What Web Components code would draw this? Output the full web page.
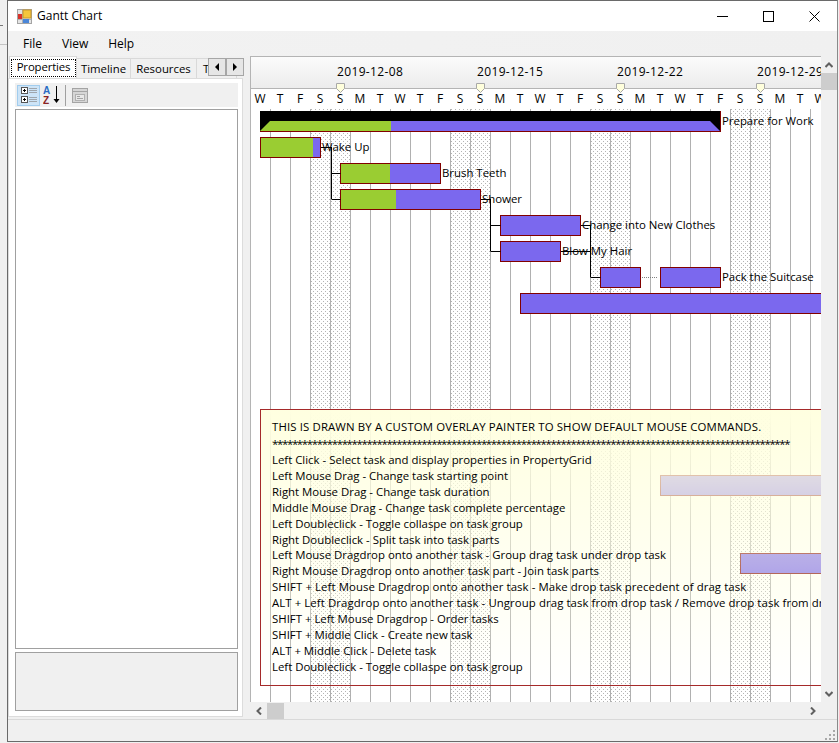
<!DOCTYPE html>
<html>
<head>
<meta charset="utf-8">
<title>Gantt Chart</title>
<style>
  html, body { margin: 0; height: 743px; overflow: hidden; }
  body {
    background:
      linear-gradient(#777, #777) 0 25px / 3px 1px no-repeat,
      linear-gradient(#c4c4c4, #c4c4c4) 0 44px / 7px 1px no-repeat,
      #f0f0f0;
    font: 12px "Open Sans", "Liberation Sans", sans-serif;
    color: #000;
  }
</style>
</head>
<body>
<app-window>
  <title-bar slot="title">Gantt Chart</title-bar>
  <menu-bar slot="menu">
    <span>File</span>
    <span>View</span>
    <span>Help</span>
  </menu-bar>
  <side-panel slot="side"></side-panel>
  <gantt-chart slot="chart"></gantt-chart>
</app-window>

<script>
const makeTemplate = (html) => {
    const template = document.createElement('template');
    template.innerHTML = html;
    return template;
};

class Base extends HTMLElement {
    connectedCallback() {
        if (this.shadowRoot) return;
        this.attachShadow({mode: 'open'});
        this.shadowRoot.appendChild(this.constructor.template.content.cloneNode(true));
        this.render && this.render();
    }
    $(selector) {
        return this.shadowRoot.querySelector(selector);
    }
}

class AppWindow extends Base {
    static template = makeTemplate(`
      <style>
        :host {
            display: flex;
            flex-direction: column;
            box-sizing: border-box;
            width: 831px;
            height: 742px;
            margin-left: 7px;
            background: #f0f0f0;
            border: 1px solid #6a6a6a;
            border-right-color: #8a8a8a;
        }
        .main { display: flex; height: 663px; }
        .side { width: 235px; flex: none; }
        .chart { margin-left: 7px; flex: 1; min-width: 0; }
        .status {
            position: relative;
            flex: 1;
            border-top: 1px solid #d9d9d9;
        }
        .status svg { position: absolute; right: 1px; bottom: 0; }
      </style>
      <slot name="title"></slot>
      <slot name="menu"></slot>
      <div class="main">
        <div class="side"><slot name="side"></slot></div>
        <div class="chart"><slot name="chart"></slot></div>
      </div>
      <div class="status">
        <svg width="12" height="12" fill="#a8a8a8">
          <rect x="9" y="1" width="2" height="2"/>
          <rect x="5" y="5" width="2" height="2"/><rect x="9" y="5" width="2" height="2"/>
          <rect x="1" y="9" width="2" height="2"/><rect x="5" y="9" width="2" height="2"/><rect x="9" y="9" width="2" height="2"/>
        </svg>
      </div>
    `);
}

class TitleBar extends Base {
    static template = makeTemplate(`
      <style>
        :host {
            display: flex;
            align-items: center;
            height: 30px;
            background: #fff;
        }
        svg.logo { margin: 0 6px 0 9px; flex: none; }
        .text { flex: 1; font-size: 12px; margin: -1px 0 0 -1px; padding-bottom: 1px; }
        .btn {
            width: 46px;
            height: 30px;
            display: flex;
            align-items: center;
            justify-content: center;
        }
      </style>
      <svg class="logo" width="15" height="15">
        <rect x=".5" y=".5" width="14" height="14" fill="#e4e4e4" stroke="#a4a4a4"/>
        <path d="M5.5 1v13M1 5.500h4M1 10.500h13" stroke="#b0b0b0"/>
        <rect x="6" y="1" width="8" height="8" fill="#f4c63c" stroke="#c8962a"/>
        <rect x="1" y="5" width="4" height="5" fill="#d8332a"/>
        <rect x="6" y="10" width="6" height="4" fill="#4a86d8"/>
      </svg>
      <div class="text"><slot></slot></div>
      <div class="btn"><svg width="11" height="11"><path d="M0 5.500h11" stroke="#000"/></svg></div>
      <div class="btn"><svg width="11" height="11"><rect x=".5" y=".5" width="10" height="10" fill="none" stroke="#000"/></svg></div>
      <div class="btn"><svg width="11" height="11"><path d="M.5 .5l10 10M10.500 .5l-10 10" stroke="#000"/></svg></div>
    `);
}

class MenuBar extends Base {
    static template = makeTemplate(`
      <style>
        :host {
            display: flex;
            align-items: center;
            gap: 20px;
            height: 25px;
            padding-left: 15px;
            background: linear-gradient(to right, #f2f2f2, #f0f0f0);
        }
      </style>
      <slot></slot>
    `);
}

class TabStrip extends Base {
    static template = makeTemplate(`
      <style>
        :host {
            display: flex;
            align-items: flex-end;
            position: relative;
            height: 22px;
            width: 236px;
            margin-left: 1px;
            overflow: hidden;
            font-size: 11.4px;
        }
        .tab {
            box-sizing: border-box;
            height: 20px;
            padding-top: 2px;
            flex: none;
            background: #f0f0f0;
            border: 1px solid #d9d9d9;
            border-bottom: none;
            border-left: none;
            text-align: center;
        }
        .tab.on {
            height: 22px;
            background: #fff;
            border-left: 1px solid #d9d9d9;
            padding: 2px 0 0 1px;
        }
        .tab.on span {
            display: block;
            height: 18px;
            line-height: 16px;
            letter-spacing: -.15px;
            outline: 1px dotted #000;
            outline-offset: -1px;
        }
        .scroll {
            position: absolute;
            left: 199px;
            top: 2px;
            display: flex;
        }
        .scroll div {
            box-sizing: border-box;
            width: 18px;
            height: 18px;
            background: #e6e6e6;
            border: 1px solid #a6a6a6;
            display: flex;
            align-items: center;
            justify-content: center;
        }
      </style>
      <div class="tab on" style="width:68px"><span>Properties</span></div>
      <div class="tab" style="width:54px">Timeline</div>
      <div class="tab" style="width:66px">Resources</div>
      <div class="tab" style="width:40px;text-align:left;padding-left:6px">Tasks</div>
      <div class="scroll">
        <div><svg width="6" height="8"><path d="M5 0v8L1 4z"/></svg></div>
        <div><svg width="6" height="8"><path d="M1 0v8l4-4z"/></svg></div>
      </div>
    `);
}

class PropToolbar extends Base {
    static template = makeTemplate(`
      <style>
        :host {
            display: flex;
            align-items: center;
            height: 24px;
            flex: none;
            background: #f0f0f0;
        }
        .btn {
            box-sizing: border-box;
            width: 23px;
            height: 21px;
            margin-left: 2px;
            display: flex;
            align-items: center;
            justify-content: center;
            background: #cde4f7;
            border: 1px solid #a2cdee;
        }
        .sep { width: 1px; height: 21px; background: #a0a0a0; margin: 0 6px 0 5px; }
        svg { display: block; flex: none; }
        .az { margin-left: 3px; }
        text { font: bold 10px "Liberation Sans", sans-serif; }
      </style>
      <div class="btn">
        <svg width="16" height="16">
          <g fill="#fff" stroke="#555">
            <rect x=".5" y=".5" width="6" height="6"/>
            <rect x=".5" y="9.500" width="6" height="6"/>
          </g>
          <path d="M2 3.500h3M3.500 2v3M2 12.500h3M3.500 11v3" stroke="#000"/>
          <path d="M8 1.500h8M8 3.500h8M8 5.500h8M8 10.500h8M8 12.500h8M8 14.500h8" stroke="#a0a6ac"/>
        </svg>
      </div>
      <svg class="az" width="17" height="20">
        <text x="0" y="9" fill="#2a6cc4">A</text>
        <text x="0" y="19" fill="#8a2222">Z</text>
        <path d="M13.500 1v16" stroke="#000"/>
        <path d="M10.500 14h6l-3 4z" fill="#000"/>
      </svg>
      <div class="sep"></div>
      <svg width="16" height="15">
        <rect x=".5" y=".5" width="15" height="14" fill="#d6d6d6" stroke="#a4a4a4"/>
        <path d="M1 3.500h14" stroke="#a4a4a4"/>
        <rect x="3.500" y="6.500" width="9" height="6" fill="#e8e8e8" stroke="#b0b0b0"/>
        <path d="M5 8.500h3M5 10.500h6" stroke="#a4a4a4"/>
      </svg>
    `);
}

class SidePanel extends Base {
    static template = makeTemplate(`
      <style>
        :host {
            display: flex;
            flex-direction: column;
            height: 661px;
        }
        .page {
            flex: 1;
            display: flex;
            flex-direction: column;
            min-height: 0;
            background: #fff;
            border: 1px solid #dcdcdc;
            padding: 4px 4px 5px 6px;
        }
        .grid {
            flex: 1;
            margin-top: 2px;
            background: #fff;
            border: 1px solid #a0a0a0;
        }
        .help {
            box-sizing: border-box;
            height: 59px;
            margin-top: 3px;
            flex: none;
            background: #f0f0f0;
            border: 1px solid #a0a0a0;
        }
      </style>
      <tab-strip></tab-strip>
      <div class="page">
        <prop-toolbar></prop-toolbar>
        <div class="grid"></div>
        <div class="help"></div>
      </div>
    `);
}

class ScrollBar extends Base {
    static template = makeTemplate(`
      <style>
        :host {
            display: flex;
            background: #f0f0f0;
            position: relative;
        }
        :host([vertical]) { flex-direction: column; width: 16px; align-items: center; }
        :host(:not([vertical])) { height: 17px; align-items: center; }
        .arrow { display: flex; align-items: center; justify-content: center; flex: none; }
        :host([vertical]) .arrow { height: 17px; width: 16px; }
        :host(:not([vertical])) .arrow { width: 17px; height: 17px; }
        .track { flex: 1; display: flex; }
        :host([vertical]) .track { flex-direction: column; }
        .thumb { background: #cdcdcd; flex: none; }
        :host([vertical]) .thumb { width: 16px; height: 17px; }
        :host(:not([vertical])) .thumb { width: 17px; height: 16px; }
        polyline { fill: none; stroke: #606060; stroke-width: 2; }
      </style>
      <div class="arrow first"></div>
      <div class="track"><div class="thumb"></div></div>
      <div class="arrow last"></div>
    `);
    render() {
        const v = this.hasAttribute('vertical');
        const chevron = (pts) => `<svg width="8" height="8"><polyline points="${pts}"/></svg>`;
        this.$('.first').innerHTML = v ? chevron('.5,6 4,2.5 7.5,6') : chevron('6,.5 2.5,4 6,7.5');
        this.$('.last').innerHTML = v ? chevron('.5,2 4,5.5 7.5,2') : chevron('2,.5 5.5,4 2,7.5');
    }
}

class GanttHeader extends Base {
    static template = makeTemplate(`
      <style>
        :host {
            display: block;
            position: relative;
            z-index: 1;
            height: 53px;
            width: 570px;
            overflow: hidden;
        }
        .dates {
            display: flex;
            height: 31px;
            padding-left: 86px;
            background: linear-gradient(#fbfbfb, #ececec);
            border-top: 1px solid #b4b4b4;
        }
        .date {
            flex: none;
            width: 140px;
            position: relative;
            line-height: 30px;
            letter-spacing: .35px;
        }
        .date svg { position: absolute; left: -1px; top: 26px; z-index: 1; }
        .days {
            display: flex;
            height: 20px;
            margin-left: -1px;
            background: #fff;
            border-top: 1px solid #b4b4b4;
            border-bottom: 1px solid #b4b4b4;
        }
        .days span {
            flex: none;
            width: 20px;
            text-align: center;
            line-height: 19px;
        }
      </style>
      <div class="dates"></div>
      <div class="days"></div>
    `);
    render() {
        const marker = `<svg width="9" height="10"><path d="M.5 .5h8v5l-4 4-4-4z" fill="#ffffdc" stroke="#a8a8a8"/></svg>`;
        this.$('.dates').innerHTML = ['2019-12-08', '2019-12-15', '2019-12-22', '2019-12-29']
            .map(d => `<div class="date">${d}${marker}</div>`).join('');
        const week = 'WTFSSMT';
        let days = '';
        for (let i = 0; i < 29; i++) days += `<span>${week[i % 7]}</span>`;
        this.$('.days').innerHTML = days;
    }
}

class GanttBar extends Base {
    static template = makeTemplate(`
      <style>
        :host {
            position: absolute;
            box-sizing: border-box;
            height: 21px;
            background: #7b68ee;
            border: 1px solid #800000;
        }
        .done { height: 100%; background: #9acd32; }
        :host([group]) {
            background: #000;
            border: none;
            border-right: 1px solid #800000;
            border-bottom: 1px solid #800000;
        }
        :host([group]) .done {
            position: absolute;
            top: 10px;
            left: 0;
            right: 0;
            height: 10px;
            clip-path: polygon(0 100%, 10px 0, calc(100% - 10px) 0, 100% 100%);
        }
      </style>
      <div class="done"></div>
    `);
    render() {
        const left = +this.getAttribute('x');
        const right = +this.getAttribute('to');
        const done = +this.getAttribute('done') || 0;
        this.style.left = (left - 251) + 'px';
        this.style.top = (+this.getAttribute('y') - 109) + 'px';
        this.style.width = (right - left) + 'px';
        const fill = this.$('.done');
        if (this.hasAttribute('group')) {
            const at = done - left;
            fill.style.background = `linear-gradient(to right, #9acd32 ${at}px, #7b68ee ${at}px)`;
        } else {
            fill.style.width = done ? (done - left - 1) + 'px' : '0';
        }
    }
}

class TaskLabel extends Base {
    static template = makeTemplate(`
      <style>
        :host {
            position: absolute;
            white-space: nowrap;
            line-height: 21px;
            font-size: 11.4px;
        }
      </style>
      <slot></slot>
    `);
    render() {
        this.style.left = (+this.getAttribute('x') - 251) + 'px';
        this.style.top = (+this.getAttribute('y') - 109) + 'px';
    }
}

class MouseHelp extends Base {
    static template = makeTemplate(`
      <style>
        :host {
            position: absolute;
            left: 9px;
            top: 300px;
            box-sizing: border-box;
            width: 700px;
            height: 277px;
            padding: 9px 0 0 11px;
            border: 1px solid #a52a2a;
            background: linear-gradient(rgba(255,255,224,1), rgba(255,255,224,0));
            white-space: nowrap;
            line-height: 16px;
            font-size: 11.4px;
        }
        .head { letter-spacing: .13px; }
        .stars { height: 16px; line-height: 18px; margin: 0 0 1px; letter-spacing: -1.3px; }
        .wide { letter-spacing: .08px; }
        div { height: 15.93px; }
      </style>
      <div class="head">THIS IS DRAWN BY A CUSTOM OVERLAY PAINTER TO SHOW DEFAULT MOUSE COMMANDS.</div>
      <div class="stars"></div>
      <div>Left Click - Select task and display properties in PropertyGrid</div>
      <div>Left Mouse Drag - Change task starting point</div>
      <div>Right Mouse Drag - Change task duration</div>
      <div>Middle Mouse Drag - Change task complete percentage</div>
      <div>Left Doubleclick - Toggle collaspe on task group</div>
      <div>Right Doubleclick - Split task into task parts</div>
      <div>Left Mouse Dragdrop onto another task - Group drag task under drop task</div>
      <div>Right Mouse Dragdrop onto another task part - Join task parts</div>
      <div class="wide">SHIFT + Left Mouse Dragdrop onto another task - Make drop task precedent of drag task</div>
      <div class="wide">ALT + Left Dragdrop onto another task - Ungroup drag task from drop task / Remove drop task from drag task precedents</div>
      <div>SHIFT + Left Mouse Dragdrop - Order tasks</div>
      <div>SHIFT + Middle Click - Create new task</div>
      <div>ALT + Middle Click - Delete task</div>
      <div>Left Doubleclick - Toggle collaspe on task group</div>
    `);
    render() {
        this.$('.stars').textContent = '*'.repeat(104);
    }
}

class GanttChart extends Base {
    static template = makeTemplate(`
      <style>
        :host {
            display: grid;
            grid-template-columns: 571px 16px;
            grid-template-rows: 646px 17px;
        }
        .pane {
            border-left: 1px solid #b4b4b4;
            display: flex;
            flex-direction: column;
            min-width: 0;
            background: #fff;
        }
        .canvas {
            position: relative;
            flex: 1;
            overflow: hidden;
        }
        svg.grid { position: absolute; left: 0; top: 0; }
        svg.links { position: absolute; left: 0; top: 0; }
        scroll-bar[vertical] { grid-row: 1; grid-column: 2; }
        scroll-bar.h { grid-row: 2; grid-column: 1; padding-left: 0; }
      </style>
      <div class="pane">
        <gantt-header></gantt-header>
        <div class="canvas">
          <svg class="grid" width="570" height="593">
            <defs>
              <pattern id="dots" width="4" height="4" patternUnits="userSpaceOnUse">
                <rect width="1" height="1" fill="#b4b4b4"/>
                <rect x="2" y="2" width="1" height="1" fill="#b4b4b4"/>
              </pattern>
            </defs>
            <g class="weekend"></g>
            <g class="lines" stroke="#b0b0b0"></g>
          </svg>
          <gantt-bar group x="260" to="721" y="111" done="391"></gantt-bar>
          <task-label x="722" y="110">Prepare for Work</task-label>
          <gantt-bar x="260" to="321" y="137" done="313"></gantt-bar>
          <task-label x="322" y="136">Wake Up</task-label>
          <gantt-bar x="340" to="441" y="163" done="390"></gantt-bar>
          <task-label x="442" y="162">Brush Teeth</task-label>
          <gantt-bar x="340" to="481" y="189" done="396"></gantt-bar>
          <task-label x="482" y="188">Shower</task-label>
          <gantt-bar x="500" to="581" y="215"></gantt-bar>
          <task-label x="582" y="214">Change into New Clothes</task-label>
          <gantt-bar x="500" to="561" y="241"></gantt-bar>
          <task-label x="562" y="240">Blow My Hair</task-label>
          <gantt-bar x="600" to="641" y="267"></gantt-bar>
          <gantt-bar x="660" to="721" y="267"></gantt-bar>
          <task-label x="722" y="266">Pack the Suitcase</task-label>
          <gantt-bar x="520" to="860" y="293"></gantt-bar>
          <gantt-bar x="660" to="860" y="475"></gantt-bar>
          <gantt-bar x="740" to="860" y="553"></gantt-bar>
          <svg class="links" width="570" height="593" fill="none" stroke="#000">
            <path d="M70 38.500h10.500M80.500 38v52M80.500 64.500h9M80.500 90.500h9"/>
            <path d="M230 90.500h9.500M239.500 90v52M239.500 116.500h10M239.500 142.500h10"/>
            <path d="M330 116.500h9.500M310 142.500h29.500M339.500 116v52M339.500 168.500h10"/>
            <path d="M391 168.500h16" stroke="#808080" stroke-dasharray="1 1"/>
          </svg>
          <mouse-help></mouse-help>
        </div>
      </div>
      <scroll-bar vertical></scroll-bar>
      <scroll-bar class="h"></scroll-bar>
    `);
    render() {
        let weekend = '';
        let lines = '';
        for (let x = 59; x < 570; x += 140) {
            weekend += `<rect x="${x}" width="40" height="593" fill="url(#dots)"/>`;
        }
        for (let x = 19; x < 570; x += 20) {
            lines += `<path d="M${x + .5} 0v593"/>`;
        }
        this.$('.weekend').innerHTML = weekend;
        this.$('.lines').innerHTML = lines;
    }
}

customElements.define('app-window', AppWindow);
customElements.define('title-bar', TitleBar);
customElements.define('menu-bar', MenuBar);
customElements.define('tab-strip', TabStrip);
customElements.define('prop-toolbar', PropToolbar);
customElements.define('side-panel', SidePanel);
customElements.define('scroll-bar', ScrollBar);
customElements.define('gantt-header', GanttHeader);
customElements.define('gantt-bar', GanttBar);
customElements.define('task-label', TaskLabel);
customElements.define('mouse-help', MouseHelp);
customElements.define('gantt-chart', GanttChart);
</script>
</body>
</html>
